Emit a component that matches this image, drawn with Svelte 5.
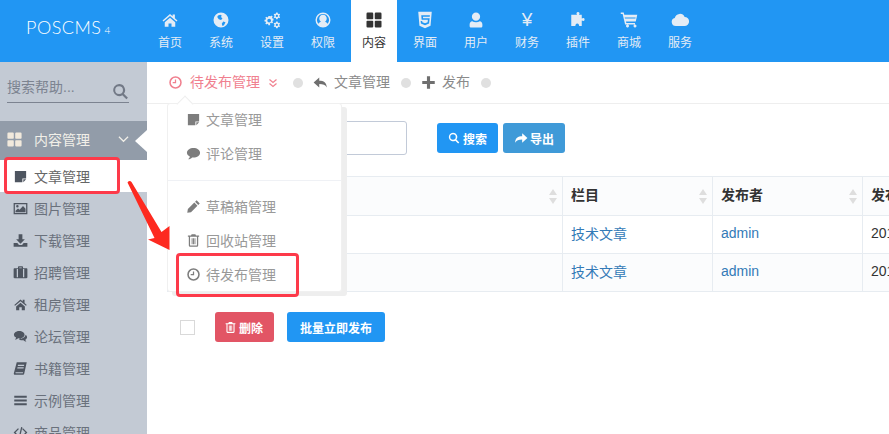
<script>
	const icons = {
		home: 'M12 4 2 12.6l1.3 1.5L12 6.6l8.700 7.500 1.300-1.500-3.500-3V4.500h-3v2.500zM5 15v6h5v-4.500h4V21h5v-6l-7-6z',
		globe: 'M12 2a10 10 0 1 0 0 20 10 10 0 0 0 0-20zM8 6l3-1 2 1-1 2 2 2-2 2-3-1-2-3zm7 8 3 1-2 4-2 1-1-3z',
		cogs: 'M9 6.500 10.500 7l1-1 1.500 1.500-1 1 .5 1.500h1.500v2.500H13l-.5 1.500 1 1-1.500 1.500-1-1-1.500.5V19H7v-1.500L5.500 17l-1 1L3 16.500l1-1L3.500 14H2v-2.500h1.500L4 10 3 9l1.500-1.500 1 1L7 8V6.500zM8.200 10.200a2.500 2.500 0 1 0 0 5 2.500 2.500 0 0 0 0-5zM17.500 2h2l.3 1.300 1.200.7 1-.5.8 1.500-1 .8v1.400l1 .8-.8 1.500-1-.5-1.200.7-.3 1.300h-2l-.3-1.300-1.200-.7-1 .5-.8-1.500 1-.8V5.800l-1-.8.800-1.500 1 .5 1.200-.7zm1 3a1.500 1.500 0 1 0 0 3 1.500 1.500 0 0 0 0-3zM17.500 14h2l.3 1.300 1.200.7 1-.5.8 1.500-1 .8v1.400l1 .8-.8 1.500-1-.5-1.200.7-.3 1.300h-2l-.3-1.300-1.200-.7-1 .5-.8-1.500 1-.8v-1.400l-1-.8.800-1.500 1 .5 1.200-.7zm1 3a1.500 1.500 0 1 0 0 3 1.500 1.500 0 0 0 0-3z',
		user_c: 'M12 2a10 10 0 1 0 0 20 10 10 0 0 0 0-20zm0 2a8 8 0 0 1 6.300 12.900C17 15.200 15.500 14.500 14.800 14.200a5 5 0 1 0-5.600 0C8.500 14.500 7 15.200 5.700 16.900A8 8 0 0 1 12 4z',
		grid: 'M2 3.500A1.500 1.500 0 0 1 3.500 2h6A1.500 1.500 0 0 1 11 3.500V10a1 1 0 0 1-1 1H3a1 1 0 0 1-1-1zM13 3.500A1.500 1.500 0 0 1 14.500 2h6A1.500 1.500 0 0 1 22 3.500V10a1 1 0 0 1-1 1h-7a1 1 0 0 1-1-1zM2 14a1 1 0 0 1 1-1h7a1 1 0 0 1 1 1v6.500A1.500 1.500 0 0 1 9.500 22h-6A1.500 1.500 0 0 1 2 20.500zM13 14a1 1 0 0 1 1-1h7a1 1 0 0 1 1 1v6.500a1.500 1.500 0 0 1-1.500 1.500h-6a1.500 1.500 0 0 1-1.500-1.500z',
		html5: 'M3 1h18l-1.600 18.500L12 23l-7.400-3.500zM7 5.500l.5 6h8.300l-.3 3.500-3.500 1.200L8.500 15l-.2-1.700H6.200l.4 3.400L12 19l5.400-2.300.8-7.200H9.500l-.2-2h9l.2-2z',
		user: 'M12 2a5.500 5.500 0 0 1 5.500 5.500A5.500 5.500 0 0 1 12 13a5.500 5.500 0 0 1-5.500-5.500A5.500 5.500 0 0 1 12 2zM7 13.500c1.300 1 3 1.500 5 1.500s3.700-.5 5-1.500c2 .3 3.500 2 3.500 4.500v2c0 1.500-1 2-2 2h-13c-1 0-2-.5-2-2v-2c0-2.500 1.500-4.200 3.500-4.500z',
		puzzle: 'M10 2.500a2.200 2.200 0 0 1 4 0c.2.800-.6 1.500-.6 2.500H17v5c1 0 1.700-.8 2.500-.6a2.200 2.200 0 0 1 0 4c-.8.2-1.500-.6-2.500-.6V20h-3.500c0-1-.1-1.500-.5-2a2.200 2.200 0 0 0-4 0c-.4.500-.5 1-.5 2H3V5h7.600c0-1-.8-1.700-.6-2.500z',
		cart: 'M1 2h4l.7 3H23l-2 9H8l.4 2H20v2H6.800L3.500 4H1zM6.300 8.500l.3 1.500h14l.3-1.500zM8 20a2 2 0 1 1 0 .01zM18 20a2 2 0 1 1 0 .01z',
		cloud: 'M6.500 20A5.500 5.500 0 0 1 5 9.200 7 7 0 0 1 18.200 8 6 6 0 0 1 18 20z',
		note: 'M3 3h18v12h-6v6H3zM16.500 16.500H21l-4.500 4.500z',
		comment: 'M12 3c5.800 0 10.500 3.400 10.500 7.700S17.800 18.400 12 18.400c-.8 0-1.500-.1-2.200-.2C8.300 20 6 21 3.500 21c1.500-1 2.500-2.700 2.600-4.200C3.500 15.400 1.500 13.200 1.500 10.700 1.500 6.400 6.200 3 12 3z',
		pencil: 'M17 2l5 5-2.500 2.500-5-5zM13.300 5.700l5 5L8 21l-6 1 1-6z',
		trash: 'M9 2h6l1 2h5v2h-1.500v14a2 2 0 0 1-2 2h-11a2 2 0 0 1-2-2V6H3V4h5zM6.500 6v13.500c0 .3.200.5.500.5h10c.3 0 .5-.2.500-.5V6zM9 8.500h1.500V18H9zM11.300 8.500h1.500V18h-1.500zM13.600 8.500h1.500V18h-1.500z',
		clock: 'M12 2a10 10 0 1 0 0 20 10 10 0 0 0 0-20zm0 2.500a7.500 7.500 0 1 1 0 15 7.500 7.500 0 0 1 0-15zM11 7h2v6H7.500v-2H11z',
		image: 'M1 3h22v18H1zM3 5v14h18V5zM7 6.500a2 2 0 1 1 0 4 2 2 0 0 1 0-4zM4 18v-2.500l4-3.500 2.500 2L16 8l4 4.500V18z',
		download: 'M9 2h6v8h4l-7 7-7-7h4zM1 16h6l2.500 3h5l2.500-3h6v6H1z',
		briefcase: 'M8 5V3.500C8 2.700 8.700 2 9.500 2h5c.800 0 1.500.7 1.500 1.500V5h5.500C22.300 5 23 5.700 23 6.500v13c0 .8-.7 1.500-1.500 1.500h-19C1.700 21 1 20.300 1 19.500v-13C1 5.700 1.700 5 2.500 5zm2 0h4V4h-4zM6 6.500v13h2v-13zM16 6.500v13h2v-13z',
		comments: 'M10 3c4.700 0 8.500 2.700 8.500 6S14.700 15 10 15c-.7 0-1.200 0-1.800-.2C7 16 5 17 3 17c1-.9 1.700-2 1.900-3.300C2.800 12.600 1.500 10.900 1.500 9c0-3.300 3.800-6 8.500-6zM20 9.300c1.500 1 2.500 2.400 2.500 4 0 1.500-1 2.900-2.800 3.900.1 1.200.8 2.100 1.800 2.800-1.800 0-3.600-.8-4.700-2.100-4 .6-6.400-.6-7.500-1.900C15 16 19.700 13.500 20 9.300z',
		book: 'M6 2h16l-4 18c-.2.800-.8 2-2 2H3c-1.200 0-2-1.200-1.700-2.500zM8 6l-.4 2h10l.4-2zM7.200 10l-.4 2h10l.4-2zM4.500 18c-.4 0-.7.300-.7.700s.3.800.7.800h11.200l.4-1.500z',
		bars: 'M2 4.500h20v3H2zM2 10.500h20v3H2zM2 16.500h20v3H2z',
		code: 'M8 5l1.500 1.500L4 12l5.500 5.500L8 19l-7-7zM16 5l7 7-7 7-1.500-1.500L20 12l-5.500-5.500zM13 3l2 .500L11 21l-2-.5z',
		search: 'M10 1.500a8.500 8.500 0 0 1 6.800 13.600l5.700 5.700-2.200 2.200-5.700-5.700A8.500 8.500 0 1 1 10 1.500zm0 3a5.500 5.500 0 1 0 0 11 5.500 5.500 0 0 0 0-11z',
		reply: 'M10 4v5c7 0 12 3 12 11-2-4-6-5.500-12-5.500V20L1 12z',
		share: 'M14 4v5C7 9 2 12 2 20c2-4 6-5.500 12-5.500V20l9-8z',
		plus: 'M9.500 2h5v7.500H22v5h-7.500V22h-5v-7.500H2v-5h7.500z'
	};

	const topNav = [
		{ label: '首页', icon: 'home' },
		{ label: '系统', icon: 'globe' },
		{ label: '设置', icon: 'cogs' },
		{ label: '权限', icon: 'user_c' },
		{ label: '内容', icon: 'grid', active: true },
		{ label: '界面', icon: 'html5' },
		{ label: '用户', icon: 'user' },
		{ label: '财务', glyph: '¥' },
		{ label: '插件', icon: 'puzzle' },
		{ label: '商城', icon: 'cart' },
		{ label: '服务', icon: 'cloud' }
	];

	const sideMenu = [
		{ label: '文章管理', icon: 'note', active: true },
		{ label: '图片管理', icon: 'image' },
		{ label: '下载管理', icon: 'download' },
		{ label: '招聘管理', icon: 'briefcase' },
		{ label: '租房管理', icon: 'home' },
		{ label: '论坛管理', icon: 'comments' },
		{ label: '书籍管理', icon: 'book' },
		{ label: '示例管理', icon: 'bars' },
		{ label: '商品管理', icon: 'code' }
	];

	const rows = [
		{ cat: '技术文章', author: 'admin', date: '2017', alt: false },
		{ cat: '技术文章', author: 'admin', date: '2017', alt: true }
	];
</script>

{#snippet icon(name, cls)}
	<svg class={cls} viewBox="0 0 24 24" aria-hidden="true"><path fill-rule="evenodd" d={icons[name]} /></svg>
{/snippet}

<div class="page">
	<header class="top">
		<div class="logo">POSCMS<small>4</small></div>
		<nav class="nav">
			{#each topNav as item}
				<div class="nav-item" class:active={item.active}>
					{#if item.glyph}
						<span class="nav-glyph">{item.glyph}</span>
					{:else}
						{@render icon(item.icon, 'nav-icon')}
					{/if}
					<span>{item.label}</span>
				</div>
			{/each}
		</nav>
	</header>

	<div class="body">
		<aside class="side">
			<div class="side-search">
				<span>搜索帮助...</span>
				{@render icon('search', 'side-search-icon')}
			</div>
			<div class="side-head">
				{@render icon('grid', 'side-head-icon')}
				<span>内容管理</span>
				<svg class="chev" viewBox="0 0 12 8"><path d="M1 1.500 6 6.500 11 1.500" fill="none" stroke="currentColor" stroke-width="1.300" /></svg>
				<i class="notch"></i>
			</div>
			{#each sideMenu as item}
				<div class="side-item" class:active={item.active}>
					{@render icon(item.icon, 'side-icon')}
					<span>{item.label}</span>
				</div>
			{/each}
		</aside>

		<main class="main">
			<div class="crumbs">
				<span class="crumb current">
					{@render icon('clock', 'crumb-icon')}
					<span class="crumb-text">待发布管理</span>
					<svg class="dbl" viewBox="0 0 10 10"><path d="M1.500 1.500 5 4.500 8.500 1.500M1.500 5.500 5 8.500 8.500 5.500" fill="none" stroke="currentColor" stroke-width="1.200" /></svg>
				</span>
				<i class="dot"></i>
				<span class="crumb">{@render icon('reply', 'crumb-icon')}<span class="crumb-text">文章管理</span></span>
				<i class="dot"></i>
				<span class="crumb">{@render icon('plus', 'crumb-icon')}<span class="crumb-text">发布</span></span>
				<i class="dot"></i>
			</div>

			<div class="filters">
				<div class="input"></div>
				<button class="btn blue">{@render icon('search', 'btn-icon')}搜索</button>
				<button class="btn steel">{@render icon('share', 'btn-icon share')}导出</button>
			</div>

			<table class="table">
				<colgroup>
					<col class="c-title" /><col class="c-cat" /><col class="c-author" /><col />
				</colgroup>
				<thead>
					<tr>
						<th><i class="sort"></i></th>
						<th>栏目<i class="sort"></i></th>
						<th>发布者<i class="sort"></i></th>
						<th>发布时间</th>
					</tr>
				</thead>
				<tbody>
					{#each rows as row}
						<tr class:alt={row.alt}>
							<td></td>
							<td><a href="#top">{row.cat}</a></td>
							<td><a href="#top">{row.author}</a></td>
							<td>{row.date}</td>
						</tr>
					{/each}
				</tbody>
			</table>

			<div class="actions">
				<i class="check"></i>
				<button class="btn red">{@render icon('trash', 'btn-icon trash')}删除</button>
				<button class="btn blue wide">批量立即发布</button>
			</div>
		</main>
	</div>

	<!-- dropdown opened from the breadcrumb -->
	<div class="menu">
		<i class="menu-arrow"></i>
		<div class="menu-item">{@render icon('note', 'menu-icon')}文章管理</div>
		<div class="menu-item">{@render icon('comment', 'menu-icon')}评论管理</div>
		<div class="menu-sep"></div>
		<div class="menu-item">{@render icon('pencil', 'menu-icon')}草稿箱管理</div>
		<div class="menu-item">{@render icon('trash', 'menu-icon')}回收站管理</div>
		<div class="menu-item">{@render icon('clock', 'menu-icon')}待发布管理</div>
	</div>

	<!-- red annotations drawn on the screenshot -->
	<div class="mark mark-side"></div>
	<div class="mark mark-menu"></div>
	<svg class="arrow" viewBox="0 0 60 100"><path d="M12.500 12.500Q14.500 10 16.500 12L46.500 62 54.500 56V80L33 69.500 39.500 68z" /></svg>
</div>

<style>
	:global(body) {
		margin: 0;
		font-family: "Liberation Sans", "Noto Sans CJK SC", sans-serif;
		font-size: 13px;
		color: #333;
	}
	.page {
		position: relative;
		width: 889px;
		height: 434px;
		overflow: hidden;
		background: #fff;
	}
	svg {
		fill: currentColor;
		display: block;
		flex: none;
	}
	i {
		display: block;
	}

	.top {
		display: flex;
		height: 62px;
		background: #2196f3;
	}
	.logo {
		width: 147px;
		box-sizing: border-box;
		padding: 17px 0 0 26px;
		font-family: "Lato", sans-serif;
		font-weight: 300;
		font-size: 18px;
		line-height: 20px;
		letter-spacing: 0.5px;
		color: #fff;
	}
	.logo small {
		font-size: 10px;
		margin-left: 3px;
	}
	.nav {
		display: flex;
		gap: 5px;
	}
	.nav-item {
		width: 46px;
		height: 62px;
		box-sizing: border-box;
		padding-top: 11px;
		display: flex;
		flex-direction: column;
		align-items: center;
		font-size: 12px;
		line-height: 17px;
		color: #e4ecf5;
	}
	.nav-item.active {
		background: #fff;
		color: #333;
	}
	.nav-icon {
		width: 18px;
		height: 18px;
		margin-bottom: 6px;
	}
	.nav-glyph {
		height: 18px;
		margin-bottom: 6px;
		font-size: 19px;
		line-height: 18px;
	}

	.body {
		display: flex;
		height: 372px;
	}
	.side {
		width: 147px;
		flex: none;
		background: #c3cad4;
	}
	.side-search {
		margin: 14px 18px 0 7px;
		height: 26px;
		display: flex;
		justify-content: space-between;
		font-size: 14px;
		line-height: 22px;
		color: #7c8390;
		border-bottom: 1px solid #7c8390;
	}
	.side-search-icon {
		width: 17px;
		height: 17px;
		margin-top: 7px;
		color: #727986;
	}
	.side-head {
		position: relative;
		box-sizing: border-box;
		margin-top: 18px;
		height: 39px;
		padding: 0 0 3px 6px;
		display: flex;
		align-items: center;
		background: #929ca9;
		color: #f1efe8;
		font-size: 14px;
	}
	.side-head-icon {
		width: 17px;
		height: 17px;
		margin-right: 11px;
		color: #f1e9dc;
	}
	.chev {
		width: 11px;
		height: 8px;
		margin-left: 28px;
		fill: none;
	}
	.notch {
		position: absolute;
		right: 0;
		top: 50%;
		margin-top: -11px;
		border: 11px solid transparent;
		border-left-width: 0;
		border-right-width: 12px;
		border-right-color: #fff;
	}
	.side-item {
		height: 32px;
		padding-left: 13px;
		display: flex;
		align-items: center;
		font-size: 14px;
		color: #6a717c;
	}
	.side-item.active {
		background: #fff;
		color: #666;
	}
	.side-icon {
		width: 15px;
		height: 15px;
		margin-right: 6px;
		color: #4e5560;
	}

	.main {
		flex: 1;
		min-width: 0;
		padding-left: 20px;
	}
	.crumbs {
		margin-left: -20px;
		padding-left: 22px;
		height: 41px;
		display: flex;
		align-items: center;
		gap: 10px;
		border-bottom: 1px solid #eee;
		font-size: 14px;
		color: #8a8a8a;
	}
	.crumb {
		display: flex;
		align-items: center;
		white-space: nowrap;
	}
	.crumb-text {
		margin-bottom: 3px;
	}
	.crumb.current {
		color: #f0808f;
	}
	.crumb-icon {
		width: 15px;
		height: 15px;
		margin-right: 6px;
		color: #6f6f6f;
	}
	.current .crumb-icon {
		margin: 0 7px 0 -1px;
		color: #f0808f;
	}
	.dbl {
		width: 10px;
		height: 10px;
		margin: 0 4px 0 8px;
		fill: none;
	}
	.dot {
		width: 10px;
		height: 10px;
		margin: 1px 0 0 1px;
		border-radius: 50%;
		background: #e0e0e0;
	}
	.filters {
		display: flex;
		align-items: center;
		gap: 5px;
		height: 34px;
		margin-top: 17px;
	}
	.input {
		box-sizing: border-box;
		width: 240px;
		height: 34px;
		margin-right: 25px;
		border: 1px solid #c2cad8;
		border-radius: 3px;
	}
	.btn {
		display: flex;
		align-items: center;
		justify-content: center;
		box-sizing: border-box;
		height: 30px;
		padding: 0 11px;
		border: 0;
		border-radius: 3px;
		font-family: inherit;
		font-size: 12px;
		font-weight: 600;
		color: #fff;
	}
	.blue {
		background: #2196f3;
	}
	.steel {
		background: #3f9ad8;
	}
	.red {
		background: #e25565;
	}
	.btn-icon {
		width: 12px;
		height: 12px;
		margin-right: 3px;
	}
	.btn :global(.share) {
		width: 14px;
		height: 14px;
		margin-right: 2px;
	}
	.btn :global(.trash) {
		width: 13px;
		height: 13px;
		margin: 0 2px 0 -2px;
	}
	.table {
		width: 742px;
		margin-top: 21px;
		table-layout: fixed;
		border-collapse: collapse;
		font-size: 14px;
	}
	.c-title {
		width: 395px;
	}
	.c-cat,
	.c-author {
		width: 150px;
	}
	.table th,
	.table td {
		position: relative;
		padding: 0 0 3px 8px;
		border: 1px solid #e7ecf1;
		text-align: left;
		white-space: nowrap;
		overflow: hidden;
	}
	.table th {
		height: 39px;
		box-sizing: border-box;
		padding-bottom: 4px;
		background: #fbfcfd;
		font-size: 14px;
		font-weight: 600;
	}
	.table td {
		height: 38px;
		box-sizing: border-box;
	}
	.alt td {
		background: #fbfcfd;
	}
	.table a {
		color: #337ab7;
		text-decoration: none;
	}
	.sort {
		position: absolute;
		right: 5px;
		top: 12px;
		width: 0;
		height: 0;
		border-left: 4.500px solid transparent;
		border-right: 4.500px solid transparent;
		border-bottom: 6px solid #dedede;
	}
	.sort::after {
		content: "";
		position: absolute;
		left: -4.500px;
		top: 9px;
		border-left: 4.500px solid transparent;
		border-right: 4.500px solid transparent;
		border-top: 6px solid #dedede;
	}
	.actions {
		display: flex;
		align-items: center;
		height: 30px;
		margin-top: 20px;
		margin-left: 13px;
	}
	.check {
		box-sizing: border-box;
		width: 15px;
		height: 15px;
		margin-right: 20px;
		border: 1px solid #d9d9d9;
	}
	.wide {
		margin-left: 13px;
		width: 98px;
	}

	.menu {
		position: absolute;
		left: 167px;
		top: 103px;
		width: 175px;
		height: 189px;
		box-sizing: border-box;
		background: #fff;
		border: 1px solid #f0f0f0;
		border-radius: 3px;
		box-shadow: 5px 4px 0 #eee;
		font-size: 14px;
		color: #999;
	}
	.menu-arrow {
		position: absolute;
		left: 11px;
		top: -6px;
		width: 11px;
		height: 11px;
		background: #fff;
		border-left: 1px solid #eee;
		border-top: 1px solid #eee;
		transform: rotate(45deg);
	}
	.menu-item {
		position: relative;
		display: flex;
		align-items: center;
		box-sizing: border-box;
		height: 34px;
		padding: 0 0 4px 18px;
	}
	.menu-icon {
		width: 15px;
		height: 15px;
		margin-right: 5px;
		color: #7d7d7d;
	}
	.menu-sep {
		height: 1px;
		margin: 8px 0 10px;
		background: #eff1f5;
	}

	.mark {
		position: absolute;
		box-sizing: border-box;
		border: 3px solid #fd3a4a;
		border-radius: 4px;
	}
	.mark-side {
		left: 4px;
		top: 157px;
		width: 116px;
		height: 37px;
	}
	.mark-menu {
		left: 176px;
		top: 253px;
		width: 123px;
		height: 44px;
	}
	.arrow {
		position: absolute;
		left: 115px;
		top: 170px;
		width: 60px;
		height: 100px;
		fill: #fd2a20;
	}
</style>
